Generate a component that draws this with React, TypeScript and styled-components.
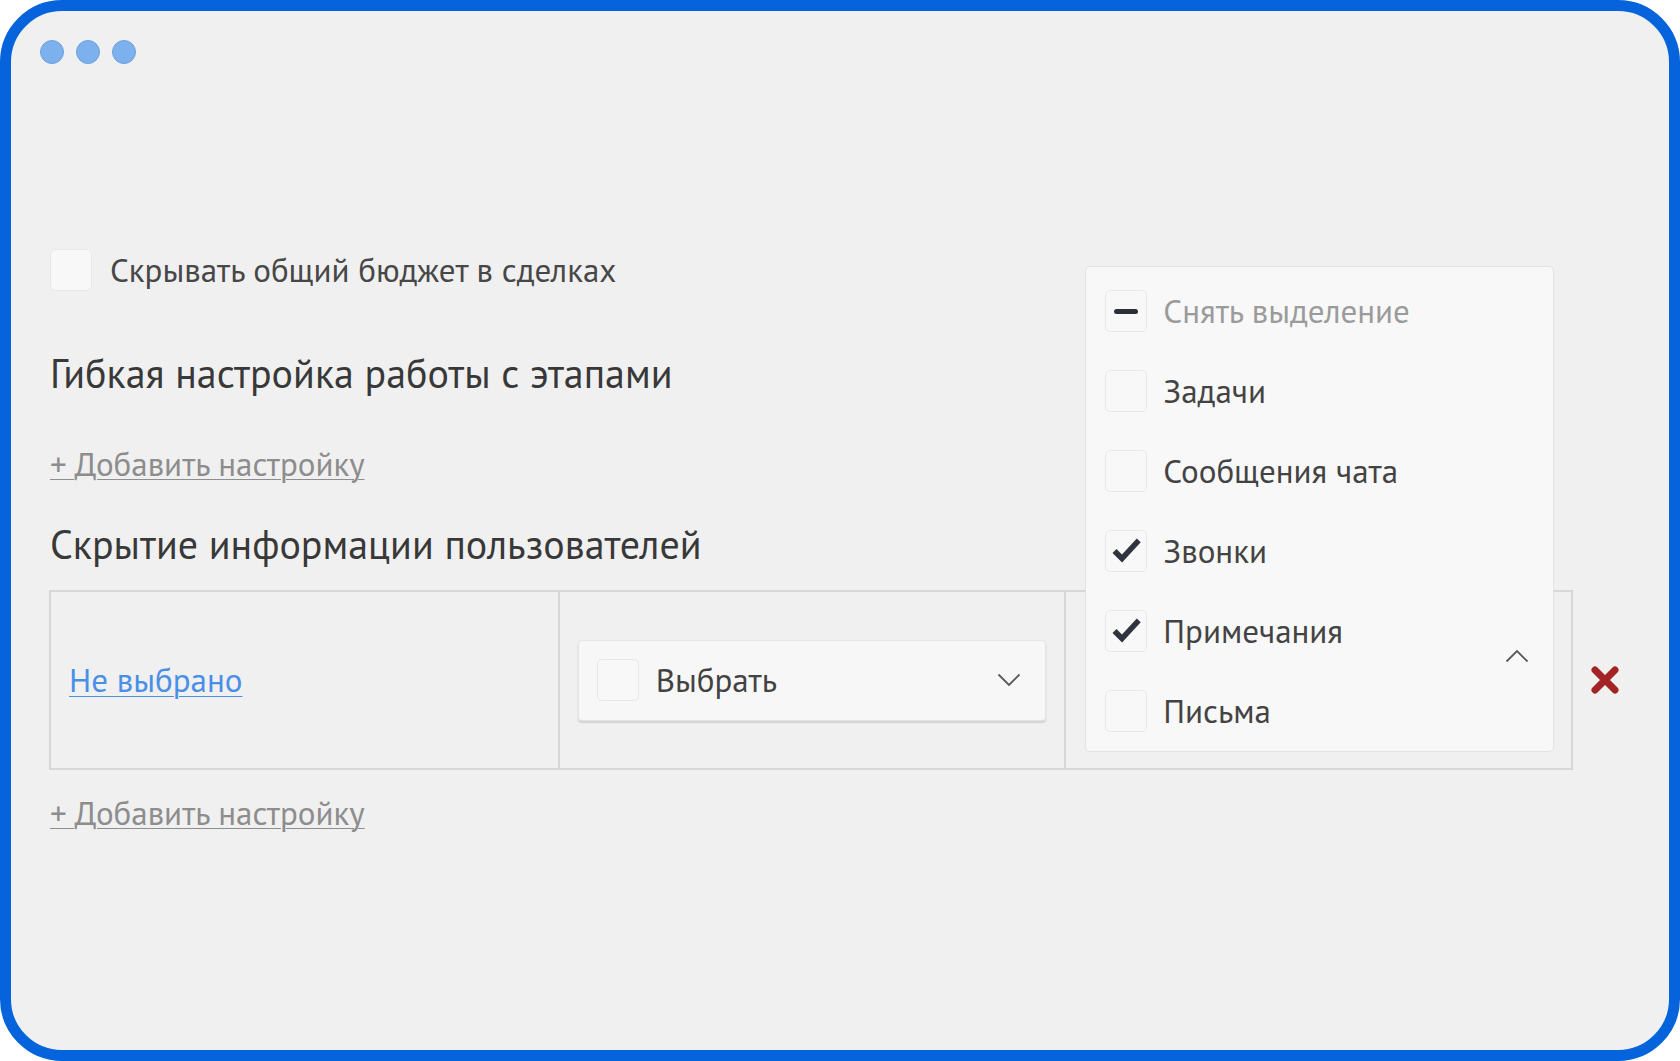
import React from "react";
import styled, { createGlobalStyle } from "styled-components";

const GlobalStyle = createGlobalStyle`
    html, body {
        margin: 0;
        padding: 0;
        background: #ffffff;
    }
    body {
        font-family: "PT Sans", Roboto, "Noto Sans", sans-serif;
        color: #454545;
    }
`;

const menuItems = [
    { label: "Задачи", checked: false },
    { label: "Сообщения чата", checked: false },
    { label: "Звонки", checked: true },
    { label: "Примечания", checked: true },
    { label: "Письма", checked: false },
];

const CheckMark = () => (
    <svg width="36" height="36" viewBox="0 0 24 24">
        <path d="M3 13.4 L5.7 10.7 L9.3 14.3 L19.2 3.6 L21.8 6.2 L9.4 19.6 Z" fill="#2e343d" strokeLinejoin="round" />
    </svg>
);

const Chevron = ({ up }: { up?: boolean }) => (
    <svg width="24" height="14" viewBox="0 0 24 14">
        <path d={up ? "M1.5 12.5 L12 2 L22.5 12.5" : "M1.5 1.5 L12 12 L22.5 1.5"} fill="none" stroke="#5a5a5a" strokeWidth="1.8" />
    </svg>
);

const RemoveIcon = () => (
    <svg width="30" height="30" viewBox="0 0 30 30">
        <path d="M5 5 L25 25 M25 5 L5 25" stroke="#a32424" strokeWidth="7" strokeLinecap="round" />
    </svg>
);

const App = () => {
    return (
        <>
            <GlobalStyle />
            <Frame>
                <TitleBar>
                    <Dot />
                    <Dot />
                    <Dot />
                </TitleBar>
                <Content>
                    <OptionRow>
                        <Box />
                        <OptionLabel>Скрывать общий бюджет в сделках</OptionLabel>
                    </OptionRow>

                    <Heading margin="58px">Гибкая настройка работы с этапами</Heading>
                    <AddLink margin="45px">+ Добавить настройку</AddLink>

                    <Heading margin="34px">Скрытие информации пользователей</Heading>

                    <TableRow>
                        <Table>
                            <Cell>
                                <UserLink>Не выбрано</UserLink>
                            </Cell>
                            <Cell>
                                <Select>
                                    <Box />
                                    <SelectLabel>Выбрать</SelectLabel>
                                    <Chevron />
                                </Select>
                            </Cell>
                            <Cell>
                                <Dropdown>
                                    <MenuItem>
                                        <Box>
                                            <Minus />
                                        </Box>
                                        <MenuLabel muted>Снять выделение</MenuLabel>
                                    </MenuItem>
                                    {menuItems.map((item) => (
                                        <MenuItem key={item.label}>
                                            <Box>{item.checked && <CheckMark />}</Box>
                                            <MenuLabel>{item.label}</MenuLabel>
                                        </MenuItem>
                                    ))}
                                    <OpenArrow>
                                        <Chevron up />
                                    </OpenArrow>
                                </Dropdown>
                            </Cell>
                        </Table>
                        <RemoveButton>
                            <RemoveIcon />
                        </RemoveButton>
                    </TableRow>

                    <AddLink margin="21px">+ Добавить настройку</AddLink>
                </Content>
            </Frame>
        </>
    );
};

const Frame = styled.div`
    box-sizing: border-box;
    width: 1680px;
    height: 1061px;
    border: 11px solid #0563dc;
    border-radius: 62px;
    background: #f0f0f0;
    display: flex;
    flex-direction: column;
    overflow: hidden;
`;

const TitleBar = styled.div`
    display: flex;
    gap: 12px;
    padding: 29px 0 0 29px;
`;

const Dot = styled.span`
    box-sizing: border-box;
    width: 24px;
    height: 24px;
    border-radius: 50%;
    background: #7db1ee;
    border: 1px solid #6aa0df;
`;

const Content = styled.div`
    display: flex;
    flex-direction: column;
    align-items: flex-start;
    padding: 185px 0 0 39px;
`;

const OptionRow = styled.div`
    display: flex;
    align-items: center;
    gap: 18px;
`;

const Box = styled.span`
    box-sizing: border-box;
    flex: none;
    width: 42px;
    height: 42px;
    border-radius: 5px;
    background: #f8f8f8;
    border: 1px solid #e8e8e8;
    display: flex;
    align-items: center;
    justify-content: center;
`;

const Minus = styled.span`
    width: 24px;
    height: 5px;
    border-radius: 3px;
    background: #2b3038;
`;

const OptionLabel = styled.span`
    font-size: 33px;
    line-height: 42px;
    color: #474747;
`;

const Heading = styled.h2<{ margin?: string }>`
    margin: ${(props) => props.margin || "0px"} 0 0 0;
    font-size: 40px;
    line-height: 48px;
    font-weight: 400;
    color: #383838;
`;

const AddLink = styled.a<{ margin?: string }>`
    margin-top: ${(props) => props.margin || "0px"};
    font-size: 33px;
    line-height: 44px;
    color: #8d8d8d;
    text-decoration: underline;
    text-decoration-thickness: 1px;
    text-underline-offset: 3px;
    cursor: pointer;
`;

const TableRow = styled.div`
    display: flex;
    align-items: center;
    gap: 17px;
    margin-top: 22px;
    margin-left: -1px;
`;

const Table = styled.div`
    box-sizing: border-box;
    width: 1524px;
    height: 180px;
    display: grid;
    grid-template-columns: repeat(3, 1fr);
    border: 2px solid #d7d7d7;
`;

const Cell = styled.div`
    position: relative;
    display: flex;
    align-items: center;
    padding: 0 18px;
    & + & {
        border-left: 2px solid #d7d7d7;
    }
`;

const UserLink = styled.a`
    font-size: 33px;
    line-height: 42px;
    color: #4a8fe6;
    text-decoration: underline;
    text-decoration-thickness: 1px;
    text-underline-offset: 4px;
    cursor: pointer;
`;

const Select = styled.div`
    box-sizing: border-box;
    flex: 1;
    height: 81px;
    display: flex;
    align-items: center;
    gap: 17px;
    padding: 0 24px 0 18px;
    background: #f7f7f7;
    border: 1px solid #e4e4e4;
    border-radius: 4px;
    box-shadow: 0 2px 2px rgba(0, 0, 0, 0.13);
    svg:last-child {
        margin-left: auto;
    }
`;

const SelectLabel = styled.span`
    font-size: 33px;
    line-height: 42px;
    color: #424242;
`;

const Dropdown = styled.div`
    position: absolute;
    left: 19px;
    right: 17px;
    bottom: 16px;
    box-sizing: border-box;
    padding: 4px 0 0 19px;
    background: #f8f8f8;
    border: 1px solid #e2e2e2;
    border-radius: 5px;
    z-index: 2;
`;

const MenuItem = styled.div`
    height: 80px;
    display: flex;
    align-items: center;
    gap: 16px;
`;

const MenuLabel = styled.span<{ muted?: boolean }>`
    font-size: 33px;
    line-height: 42px;
    color: ${(props) => (props.muted ? "#9b9b9b" : "#434343")};
`;

const OpenArrow = styled.span`
    position: absolute;
    right: 24px;
    bottom: 88px;
    display: flex;
`;

const RemoveButton = styled.span`
    display: flex;
    cursor: pointer;
`;

export default App;
